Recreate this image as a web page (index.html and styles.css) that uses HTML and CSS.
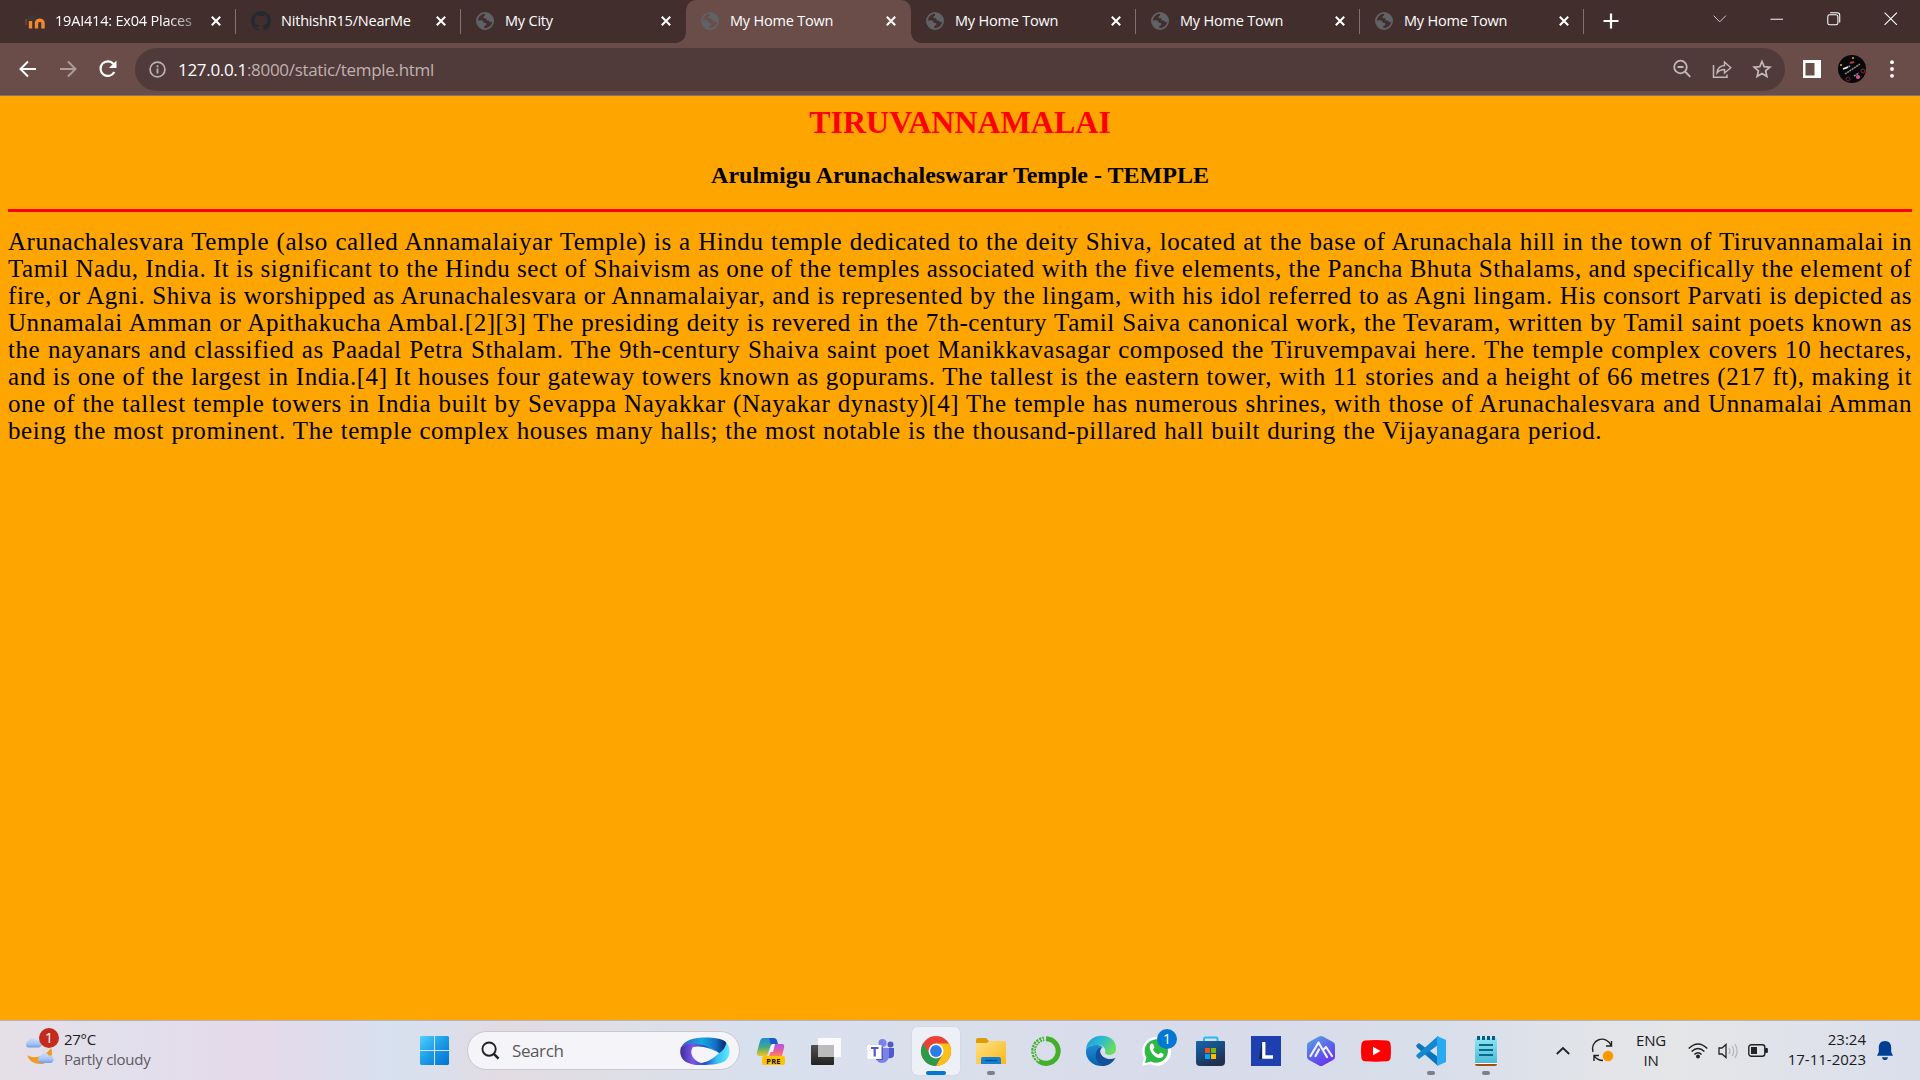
FILE: index.html
```html
<!DOCTYPE html>
<html lang="en">
<head>
<meta charset="utf-8">
<title>My Home Town</title>
<link rel="stylesheet" href="styles.css">
</head>
<body>
<svg class="defs" width="0" height="0">
  <defs>
    <symbol id="globe" viewBox="0 0 18 18"><circle cx="9" cy="9" r="8.100" fill="none" stroke="#5f6368" stroke-width="1.800"/><path d="M9 1.500C14 1.500 17 5 16.500 9.500L14.500 10.300 12.500 8.500 10.500 8.300 10.500 6.500 7.500 6 7.500 4.500 9 3.500Z" fill="#5f6368"/><path d="M1.500 8.500L6 8.300 8 10.700 10.300 11.300 10.300 12.800 8.300 14 8.300 16.500C4.500 16.500 1.500 12.500 1.500 8.500Z" fill="#5f6368"/></symbol>
    <symbol id="x" viewBox="0 0 10 10"><path d="M.8.8l8.400 8.400M9.200.8L.8 9.200" stroke="#fff" stroke-width="2" fill="none"/></symbol>
    <linearGradient id="win" x1="0" y1="0" x2="1" y2="1"><stop offset="0" stop-color="#4fd0ff"/><stop offset=".5" stop-color="#1b9be6"/><stop offset="1" stop-color="#0071d4"/></linearGradient>
    <linearGradient id="loopTop" x1="0" y1="0" x2="1" y2="0"><stop offset="0" stop-color="#3f57cf"/><stop offset=".45" stop-color="#16a9dc"/><stop offset=".75" stop-color="#1275cc"/><stop offset="1" stop-color="#07246e"/></linearGradient>
    <linearGradient id="loopBot" x1="0" y1="0" x2="1" y2="0"><stop offset="0" stop-color="#3b2f9b"/><stop offset=".25" stop-color="#7d55e8"/><stop offset=".5" stop-color="#1c4fc4"/><stop offset=".75" stop-color="#36c3f5"/><stop offset="1" stop-color="#63e8ff"/></linearGradient>
    <linearGradient id="cpL" x1="0" y1="0" x2="0" y2="1"><stop offset="0" stop-color="#1a8de0"/><stop offset=".5" stop-color="#47a786"/><stop offset="1" stop-color="#f0c520"/></linearGradient>
    <linearGradient id="cpR" x1="0" y1="0" x2="0" y2="1"><stop offset="0" stop-color="#a45bea"/><stop offset=".6" stop-color="#ef5a9d"/><stop offset="1" stop-color="#f98a50"/></linearGradient>
    <linearGradient id="dark" x1="0" y1="0" x2="0" y2="1"><stop offset="0" stop-color="#505050"/><stop offset="1" stop-color="#222"/></linearGradient>
    <linearGradient id="fold" x1="0" y1="0" x2="1" y2="1"><stop offset="0" stop-color="#ffe08a"/><stop offset="1" stop-color="#fbb914"/></linearGradient>
    <linearGradient id="edgeTop" x1="0" y1="0" x2="1" y2=".5"><stop offset="0" stop-color="#1b94d8"/><stop offset=".5" stop-color="#2cbbd2"/><stop offset="1" stop-color="#69dd5a"/></linearGradient>
    <linearGradient id="edgeBot" x1="0" y1="0" x2="0" y2="1"><stop offset="0" stop-color="#1c8cd4"/><stop offset="1" stop-color="#0a5fb0"/></linearGradient>
    <linearGradient id="store" x1="0" y1="0" x2=".5" y2="1"><stop offset="0" stop-color="#1267b0"/><stop offset="1" stop-color="#20304f"/></linearGradient>
    <linearGradient id="hex" x1="0" y1="0" x2=".6" y2="1"><stop offset="0" stop-color="#58a8e2"/><stop offset=".6" stop-color="#5a62ea"/><stop offset="1" stop-color="#6b35f0"/></linearGradient>
    <linearGradient id="note" x1="0" y1="0" x2="0" y2="1"><stop offset="0" stop-color="#8de4f2"/><stop offset="1" stop-color="#4dbbd8"/></linearGradient>
    <linearGradient id="cloud" x1="0" y1="0" x2="0" y2="1"><stop offset="0" stop-color="#c9ddfa"/><stop offset=".6" stop-color="#a9c6f4"/><stop offset="1" stop-color="#6f9ce6"/></linearGradient>
  </defs>
</svg>

<header class="tabs">
  <div class="tab first">
    <svg class="fav" viewBox="0 0 20 20"><path d="M5.500 17.500V10" stroke="#ef8a30" stroke-width="3.400" fill="none"/><path d="M11.500 17.500V12C11.500 8.300 18 8.300 18 12V17.500" stroke="#ef8a30" stroke-width="3.400" fill="none"/><path d="M0 8L7 4 12 4.500 10 8.500 5 10Z" fill="#3f3835"/><path d="M1 8V14" stroke="#8a5a3c"/></svg>
    <span class="title fade">19AI414: Ex04 Places</span><svg class="x"><use href="#x"/></svg>
  </div>
  <div class="tab">
    <svg class="fav" viewBox="0 0 16 16"><path fill="#24292f" d="M8 0C3.580 0 0 3.580 0 8c0 3.540 2.290 6.530 5.470 7.590.4.070.55-.17.55-.38v-1.490c-2.010.37-2.530-.49-2.690-.94-.09-.23-.48-.94-.82-1.130-.28-.15-.68-.52-.01-.53.63-.01 1.080.58 1.230.82.72 1.210 1.870.87 2.330.66.07-.52.28-.87.51-1.070-1.780-.2-3.640-.89-3.640-3.950 0-.87.31-1.590.82-2.150-.08-.2-.36-1.020.08-2.120 0 0 .67-.21 2.200.82a7.600 7.600 0 014 0c1.530-1.040 2.200-.82 2.200-.82.44 1.100.16 1.920.08 2.120.51.56.82 1.270.82 2.150 0 3.070-1.870 3.750-3.650 3.950.29.25.54.73.54 1.480v2.200c0 .21.15.46.55.38A8 8 0 0016 8c0-4.420-3.580-8-8-8z"/></svg>
    <span class="title wide">NithishR15/NearMe</span><svg class="x"><use href="#x"/></svg>
  </div>
  <div class="tab plain"><svg class="fav globe"><use href="#globe"/></svg><span class="title">My City</span><svg class="x"><use href="#x"/></svg></div>
  <div class="tab active"><svg class="fav globe"><use href="#globe"/></svg><span class="title">My Home Town</span><svg class="x"><use href="#x"/></svg></div>
  <div class="tab"><svg class="fav globe"><use href="#globe"/></svg><span class="title">My Home Town</span><svg class="x"><use href="#x"/></svg></div>
  <div class="tab short"><svg class="fav globe"><use href="#globe"/></svg><span class="title">My Home Town</span><svg class="x"><use href="#x"/></svg></div>
  <div class="tab short"><svg class="fav globe"><use href="#globe"/></svg><span class="title">My Home Town</span><svg class="x"><use href="#x"/></svg></div>
  <svg class="plus" viewBox="0 0 16 16"><path d="M8 .5v15M.5 8h15" stroke="#fff" stroke-width="2.200"/></svg>
  <div class="controls">
    <svg viewBox="0 0 14 14"><path d="M.7 3.800L7 10.200l6.300-6.400" stroke="#d8d2d2" fill="none"/></svg>
    <svg viewBox="0 0 14 14"><path d="M.5 7.500h13" stroke="#fff" fill="none"/></svg>
    <svg viewBox="0 0 14 14"><rect x=".8" y="2.800" width="10.500" height="10.500" rx="2" stroke="#fff" stroke-width="1.100" fill="none"/><path d="M3.200.8H10.500Q13.200.8 13.200 3.500V10.800" stroke="#fff" stroke-width="1.100" fill="none"/></svg>
    <svg viewBox="0 0 14 14"><path d="M.6.6l12.800 12.800M13.400.6L.6 13.400" stroke="#fff" stroke-width="1.100" fill="none"/></svg>
  </div>
</header>

<nav class="toolbar">
  <svg class="nav" viewBox="0 0 20 20"><path d="M18 10H3M10 2.500L2.500 10l7.500 7.500" stroke="#fff" stroke-width="2" fill="none"/></svg>
  <svg class="nav dim" viewBox="0 0 20 20"><path d="M2 10h15M10 2.500l7.500 7.500-7.500 7.500" stroke="#fff" stroke-width="2" fill="none"/></svg>
  <svg class="nav" viewBox="0 0 20 20"><path d="M16.300 13A7.300 7.300 0 1 1 15.500 5" stroke="#fff" stroke-width="2.200" fill="none"/><path d="M18.500 1.500V9H11Z" fill="#fff"/></svg>
  <div class="omni">
    <svg class="info" viewBox="0 0 17 17"><circle cx="8.500" cy="8.500" r="7.400" stroke="#b9b3b8" stroke-width="1.700" fill="none"/><path d="M8.500 7.500v5M8.500 4.300v2" stroke="#b9b3b8" stroke-width="1.800"/></svg>
    <span class="url"><b>127.0.0.1</b>:8000/static/temple.html</span>
    <svg class="act" viewBox="0 0 20 20"><circle cx="8.500" cy="8" r="6.300" stroke="#c3b8b8" stroke-width="1.800" fill="none"/><path d="M5.500 8h6M13 12.500l5.300 5.300" stroke="#c3b8b8" stroke-width="1.900"/></svg>
    <svg class="act" viewBox="0 0 20 20"><path d="M1.500 6v12.200h13.500V15.500" stroke="#c3b8b8" stroke-width="1.500" fill="none"/><path d="M5 14C5.500 9 8 6.800 12.500 6.500V3L18.800 8.700 12.500 14V10.500C9.500 10.500 7 11.500 5 14Z" stroke="#c3b8b8" stroke-width="1.400" fill="none"/></svg>
    <svg class="act" viewBox="0 0 20 20"><path d="M10 2.500l2.200 5.200 5.700.5-4.300 3.700 1.300 5.600-4.900-3-4.900 3 1.300-5.600L2.100 8.200l5.700-.5Z" stroke="#c3b8b8" stroke-width="1.700" fill="none"/></svg>
  </div>
  <svg class="panel" viewBox="0 0 18 18"><path fill-rule="evenodd" d="M0 0h18v18H0ZM2.500 3v12.500h9V3Z" fill="#fff"/></svg>
  <svg class="avatar" viewBox="0 0 28 28"><circle cx="14" cy="14" r="14" fill="#080808"/><path d="M7 19L22 9M8 13l4-2M16 21l5-3" stroke="#8f8f8f" stroke-width="1.500" stroke-dasharray="2 .7"/><path d="M5 14l5-2" stroke="#eee" stroke-width="1.600"/><path d="M12 8l4-1" stroke="#b23b48" stroke-width="2"/><circle cx="10" cy="24" r="2" fill="none" stroke="#7a1f35"/><circle cx="25" cy="16" r="2" fill="none" stroke="#9a1f38"/><circle cx="20" cy="22" r="2" fill="#e653a5"/><circle cx="15" cy="3" r="1" fill="#e8b03a"/><circle cx="3" cy="10" r="1" fill="#e8b03a"/></svg>
  <svg class="dots" viewBox="0 0 4 18"><circle cx="2" cy="2.200" r="1.900" fill="#fff"/><circle cx="2" cy="9" r="1.900" fill="#fff"/><circle cx="2" cy="15.800" r="1.900" fill="#fff"/></svg>
</nav>

<main class="page">
  <h1>TIRUVANNAMALAI</h1>
  <h2>Arulmigu Arunachaleswarar Temple - TEMPLE</h2>
  <hr>
  <p>
    <span>Arunachalesvara Temple (also called Annamalaiyar Temple) is a Hindu temple dedicated to the deity Shiva, located at the base of Arunachala hill in the town of Tiruvannamalai in</span>
    <span>Tamil Nadu, India. It is significant to the Hindu sect of Shaivism as one of the temples associated with the five elements, the Pancha Bhuta Sthalams, and specifically the element of</span>
    <span>fire, or Agni. Shiva is worshipped as Arunachalesvara or Annamalaiyar, and is represented by the lingam, with his idol referred to as Agni lingam. His consort Parvati is depicted as</span>
    <span>Unnamalai Amman or Apithakucha Ambal.[2][3] The presiding deity is revered in the 7th-century Tamil Saiva canonical work, the Tevaram, written by Tamil saint poets known as</span>
    <span>the nayanars and classified as Paadal Petra Sthalam. The 9th-century Shaiva saint poet Manikkavasagar composed the Tiruvempavai here. The temple complex covers 10 hectares,</span>
    <span>and is one of the largest in India.[4] It houses four gateway towers known as gopurams. The tallest is the eastern tower, with 11 stories and a height of 66 metres (217 ft), making it</span>
    <span>one of the tallest temple towers in India built by Sevappa Nayakkar (Nayakar dynasty)[4] The temple has numerous shrines, with those of Arunachalesvara and Unnamalai Amman</span>
    <span class="last">being the most prominent. The temple complex houses many halls; the most notable is the thousand-pillared hall built during the Vijayanagara period.</span>
  </p>
</main>

<footer class="taskbar">
  <div class="weather">
    <div class="wicon">
      <svg viewBox="0 0 32 30"><path d="M3 19C8 23 20 22 27 12C30 18 26 28 17 28C10 28 5 25 3 19Z" fill="#f29a1f"/><path d="M3.500 11.500A3.800 3.800 0 0 1 4 5A5 5 0 0 1 13 4.500A3.600 3.600 0 0 1 15 11.500Z" fill="url(#cloud)"/><path d="M15.500 27A3.800 3.800 0 0 1 16 20.500A5 5 0 0 1 25 19.500A3.900 3.900 0 0 1 27 27Z" fill="url(#cloud)"/></svg>
      <span class="badge red">1</span>
    </div>
    <div class="wtext"><span class="temp">27°C</span><span class="cond">Partly cloudy</span></div>
  </div>
  <svg class="start" viewBox="0 0 29 29"><path d="M1 0H14V14H0V1ZM15 0H28L29 1V14H15ZM0 15H14V29H1L0 28ZM15 15H29V28L28 29H15Z" fill="url(#win)"/></svg>
  <div class="search">
    <svg class="mag" viewBox="0 0 20 20"><circle cx="8.500" cy="8.500" r="7" stroke="#222" stroke-width="2" fill="none"/><path d="M13.500 13.500l5 5" stroke="#222" stroke-width="2.600"/></svg>
    <span>Search</span>
    <svg class="loop" viewBox="0 0 50 28"><path fill-rule="evenodd" d="M1 10C-2 20 4 28 20 28C32 28 44 27 47 22C51 17 50 10 46 5L36 2 10 4ZM13 10C9 15 12 23 21 26C28 25 34 21 39 16C32 12 22 8 13 10Z" fill="url(#loopBot)"/><path d="M1 11C5 -1 28 0 37 1.500C42 2.300 46 4 46 6C46 10 42 15 39 16C34 11 23 7 14 7C7 7 2 8 1 11Z" fill="url(#loopTop)"/></svg>
  </div>
  <div class="apps">
    <div class="app"><svg viewBox="0 0 30 30"><path d="M7 2H17Q21 2 20 6L15 9 11 20H4Q0 20 1 16L4 5Q5 2 7 2Z" fill="url(#cpL)"/><path d="M13 2H18Q21 2 22 8H16Q13 8 14 5Z" fill="#1b58c8"/><path d="M18 8H26Q29 8 28 12L26 20H13Z" fill="url(#cpR)"/><path d="M15 10L17 8H19L17 16H13Z" fill="#f4eff8"/><rect x="6" y="20" width="23" height="9" rx="2" fill="#ffc400"/><text x="17.500" y="27.800" class="pre">PRE</text></svg></div>
    <div class="app"><svg viewBox="0 0 30 30"><rect y="9" width="23" height="20" rx="1" fill="url(#dark)"/><path d="M7 2H30V21H7Z" fill="#fff" fill-opacity=".85"/><path d="M7 9H23V21H7Z" fill="#bbb"/></svg></div>
    <div class="app"><svg viewBox="0 0 30 30"><circle cx="16.500" cy="7" r="4" fill="#7b83eb"/><circle cx="24.500" cy="8.500" r="3" fill="#5059c9"/><path d="M22 12H28V19Q27 23 22 22Z" fill="#5059c9"/><path d="M10 12H23V20Q22 27 16 27Q11 27 10 22Z" fill="#7b83eb"/><path d="M16 11v12H10" stroke="#555cc0" stroke-width="2" fill="none"/><rect x="1.500" y="9" width="14" height="14" fill="#fff"/><path d="M5 12H12.500M8.700 12V20.500" stroke="#5059c9" stroke-width="2.200"/></svg></div>
    <div class="app current"><svg viewBox="0 0 30 30"><circle cx="15" cy="15" r="15" fill="#ea4335"/><path d="M2 7.500A15 15 0 0 0 15 30L21.100 18.500 8.900 18.500Z" fill="#2c9a49"/><path d="M15 30A15 15 0 0 0 28 7.500H15L21.500 18.700Z" fill="#fbc116"/><circle cx="15" cy="15" r="7.500" fill="#fff"/><circle cx="15" cy="15" r="5.900" fill="#2b7de9"/></svg></div>
    <div class="app run"><svg viewBox="0 0 30 30"><path d="M0 4Q0 2 2 2H10L13 5V9H0Z" fill="#dd9d08"/><path d="M0 7H11L13 5H28Q30 5 30 7V28H0Z" fill="url(#fold)"/><path d="M5 28V23Q5 21 7 21H23Q25 21 25 23V28Z" fill="#127fd2"/><path d="M9 24.500H21" stroke="#0a4c92" stroke-width="1.200"/></svg></div>
    <div class="app"><svg viewBox="0 0 30 30"><path d="M15 2.700A12.300 12.300 0 1 1 8 25.200" stroke="#43b02a" stroke-width="5" fill="none"/><path d="M8 25.200A12.300 12.300 0 0 1 13 2.800" stroke="#43b02a" stroke-width="4.600" stroke-dasharray="2.200 .9" fill="none"/><path d="M8 25A12.300 12.300 0 0 1 12.500 3" stroke="#dadfea" stroke-width="1.200" stroke-dasharray="2 1.200" fill="none"/></svg></div>
    <div class="app"><svg viewBox="0 0 30 30"><path d="M0 14C1-5 30-4 30 12C30 17 27 19 23 19C20 19 18 18 19 16C20 14 18 8 10 9C5 9 1 11 0 14Z" fill="url(#edgeTop)"/><path d="M0 14C2 8 17 7 17 13C13 13 11 20 16 25C18 28 22 28 18 30C8 31-1 24 0 14Z" fill="url(#edgeBot)"/><path d="M13 12C8 16 8 26 17 30C23 30 27 26 29.500 22C22 25 15 21 14.500 16C14.500 14.500 15.500 12.500 17 12Z" fill="#134f9b"/><path d="M17 11.500C14 12 13.500 16 16 19C19 22.500 25 22 29.500 20L29 17C27 19.500 20 20 19 16.500C19.500 15 19.500 13 17 11.500Z" fill="#dadfea"/></svg></div>
    <div class="app"><svg viewBox="0 0 30 30"><path d="M1 30L3 22A14.500 14.500 0 1 1 9 28Z" fill="#fff"/><path d="M4 27L5.500 21.500A11.700 11.700 0 1 1 10 25.500Z" fill="#2eb944"/><path d="M9 9C10 7 12 7 12.500 9L13.500 11.500L12 13.500C13 16 15 17.500 17.500 18.500L19.500 16.500L22.500 18C23 21 20 22.500 17.500 22C12.500 21 7.500 14 9 9Z" fill="#fff"/></svg><span class="badge blue">1</span></div>
    <div class="app"><svg viewBox="0 0 30 30"><path d="M8 6V3Q8 1.500 9.500 1.500H20Q21.500 1.500 21.500 3V6" stroke="#25bdf1" stroke-width="2" fill="none"/><path d="M0 6Q0 5 1 5H28Q29 5 29 6V26Q29 30 25 30H4Q0 30 0 26Z" fill="url(#store)"/><path d="M9 12h5v5H9Z" fill="#f25022"/><path d="M15 12h5v5h-5Z" fill="#7fba00"/><path d="M9 18h5v5H9Z" fill="#00a4ef"/><path d="M15 18h5v5h-5Z" fill="#ffb900"/></svg></div>
    <div class="app"><svg viewBox="0 0 30 30"><rect width="30" height="30" fill="#1d3faf"/><path d="M11 6L8 23H13Z" fill="#0b2a4a"/><path d="M12.800 6V21H22" stroke="#fff" stroke-width="3.300" fill="none"/></svg></div>
    <div class="app"><svg viewBox="0 0 30 30"><path d="M13 .6Q15-.5 17 .6L27 6Q29 7 29 9V21Q29 23 27 24L17 29.500Q15 30.500 13 29.500L3 24Q1 23 1 21V9Q1 7 3 6Z" fill="url(#hex)"/><path d="M4.500 20L12.500 6.500 21 21M9.500 20L13 13.500M18 13L20 11 26 20" stroke="#f2f0ff" stroke-width="2.200" fill="none" stroke-linecap="round" stroke-linejoin="round"/></svg></div>
    <div class="app"><svg viewBox="0 0 30 30"><path d="M4 4.500Q15 3.500 26 4.500Q29.500 5 29.700 9Q30.300 15 29.700 21Q29.500 25 26 25.300Q15 26 4 25.300Q.5 25 .3 21Q-.3 15 .3 9Q.5 5 4 4.500Z" fill="#f00"/><path d="M12 10.700L19.500 15L12 19.300Z" fill="#fff"/></svg></div>
    <div class="app run"><svg viewBox="0 0 30 30"><path d="M0 9.500L3 7 22 21V30L1 11.500Z" fill="#0a74bd"/><path d="M0 20L3 23 22 9V0L1 18.500Z" fill="#1488cf"/><path d="M21 0L30 4V26L21 30Z" fill="#29a9f2"/></svg></div>
    <div class="app run"><svg viewBox="0 0 30 30"><path d="M4 25H26V28Q26 30 24 30H6Q4 30 4 28Z" fill="#a34f0b"/><path d="M4 25H26V28H4Z" fill="#fff"/><path d="M4 4Q4 2 6 2H24Q26 2 26 4V27H4Z" fill="url(#note)"/><path d="M8 9H22M8 14H22M8 19H22" stroke="#086a8c" stroke-width="1.800"/><path d="M7.500 0V4M12.500 0V4M17.500 0V4M22.500 0V4" stroke="#075c80" stroke-width="3"/></svg></div>
  </div>
  <div class="tray">
    <svg class="chev" viewBox="0 0 14 8"><path d="M.8 7L7 1l6.200 6" stroke="#222" stroke-width="1.800" fill="none"/></svg>
    <svg class="upd" viewBox="0 0 22 22"><path d="M1 12A9.500 9.500 0 0 1 19 5.500M19.500 1V6H14M2 21V15.500H7M2.500 16.500Q6 20.500 11 20.500" stroke="#222" stroke-width="1.400" fill="none"/><circle cx="16" cy="16" r="5.300" fill="#ff9800"/></svg>
    <div class="lang"><span>ENG</span><span>IN</span></div>
    <svg class="wifi" viewBox="0 0 20 16"><path d="M.7 5.500Q10-3.500 19.300 5.500M3.600 8.600Q10 2.400 16.400 8.600M6.400 11.500Q10 8 13.600 11.500" stroke="#222" stroke-width="1.400" fill="none"/><circle cx="10" cy="13.500" r="2" fill="#222"/></svg>
    <svg class="vol" viewBox="0 0 20 16"><path d="M1 5H4L8 1.500V14.500L4 11H1Z" stroke="#222" stroke-width="1.300" fill="none"/><path d="M11 5Q13 8 11 11M14 3Q17.500 8 14 13M16.800 1Q21.500 8 16.800 15" stroke="#b5b5b8" stroke-width="1.300" fill="none"/></svg>
    <svg class="bat" viewBox="0 0 20 13"><rect x=".8" y=".8" width="16" height="11.400" rx="2.500" stroke="#222" stroke-width="1.400" fill="none"/><rect x="3" y="3" width="6" height="7" fill="#222"/><path d="M17.500 4.500H19.300V8.500H17.500Z" fill="#222" stroke="#222"/></svg>
    <div class="clock"><span>23:24</span><span>17-11-2023</span></div>
    <svg class="bell" viewBox="0 0 16 19"><path d="M8 0C4 0 1.800 2.800 1.800 6.500V11L0 14.800H16L14.200 11V6.500C14.200 2.800 12 0 8 0ZM5 16.200H11Q10.500 19 8 19Q5.500 19 5 16.200Z" fill="#003f94"/></svg>
  </div>
</footer>
</body>
</html>
```

FILE: styles.css
```css
* { box-sizing: border-box; }
body { margin: 0; width: 1920px; height: 1080px; overflow: hidden; display: flex; flex-direction: column; background: orange; font-family: "Open Sans", "Noto Sans", sans-serif; }
svg { display: block; flex: none; overflow: visible; }
.defs { position: absolute; }

.tabs { height: 43px; flex: none; display: flex; background: #432e2e; padding-left: 11px; }
.tab { width: 225px; flex: none; height: 43px; display: flex; align-items: center; padding: 0 15px 2px; position: relative; color: #fff; }
.tab.short { width: 224px; }
.tab.first { padding-left: 14px; }
.tab.first .fav { margin-right: 10px; }
.tab::after { content: ""; position: absolute; right: 0; top: 9px; width: 1px; height: 25px; background: #84706f; }
.tab.plain::after { display: none; }
.tab.active { background: #6a4d48; border-radius: 10px 10px 0 0; }
.tab.active::before, .tab.active::after { display: block; content: ""; top: auto; bottom: 0; position: absolute; width: 10px; height: 10px; background: radial-gradient(circle at 0 0, #432e2e 9.500px, #6a4d48 10px); }
.tab.active::before { left: -10px; }
.tab.active::after { right: -10px; background: radial-gradient(circle at 100% 0, #432e2e 9.500px, #6a4d48 10px); }
.fav { width: 20px; height: 20px; margin-right: 10px; }
.fav.globe { width: 18px; height: 18px; margin-right: 11px; }
.title { flex: 1; font-size: 14.500px; letter-spacing: -.2px; white-space: nowrap; overflow: hidden; }
.fade { margin-right: 17px; -webkit-mask-image: linear-gradient(90deg, #000 80%, rgba(0,0,0,.4)); mask-image: linear-gradient(90deg, #000 80%, rgba(0,0,0,.4)); }
.x { width: 10px; height: 10px; }
.plus { width: 16px; height: 16px; margin: 13px 0 0 19px; }
.controls { display: flex; gap: 43.500px; margin: 12px 23px 0 auto; }
.controls svg { width: 13.500px; height: 13.500px; }

.toolbar { height: 53px; flex: none; display: flex; align-items: center; background: #6a4d48; border-bottom: 1px solid #88716d; padding: 0 26px 0 18px; }
.nav { width: 20px; height: 20px; margin-right: 20px; }
.dim { opacity: .45; }
.omni { width: 1650px; height: 43px; border-radius: 22px; background: #503b3a; margin-left: -3px; display: flex; align-items: center; padding: 0 13px 0 14px; }
.info { width: 17px; height: 17px; margin-right: 12px; }
.url { flex: 1; font-size: 17px; letter-spacing: -.31px; color: #c0b1b0; white-space: nowrap; }
.url b { color: #fff; font-weight: 400; }
.act { width: 20px; height: 20px; margin-left: 20px; }
.panel { width: 18px; height: 18px; margin: 0 17px 0 18px; }
.avatar { width: 28px; height: 28px; }
.dots { width: 4px; height: 18px; margin-left: 24px; }

.page { flex: 1; padding: 8px; color: #000; }
h1, h2 { font-family: "Liberation Serif", serif; text-align: center; margin: 0; }
h1 { font-size: 32px; line-height: 37px; color: red; }
h2 { font-size: 24px; line-height: 27px; margin-top: 21px; }
hr { height: 3px; border: 0; margin: 20px 0 16px; background: red; }
.page p { margin: 0; font: 25px/27px "Liberation Serif", serif; letter-spacing: .55px; word-spacing: -2px; }
.page p span { display: block; text-align: justify; text-align-last: justify; }
.page p .last { width: 1594px; }

.taskbar { height: 60px; flex: none; display: flex; align-items: center; border-top: 1px solid #b3b3c6; background: linear-gradient(90deg, #e5dfe6 0, #e2dfec 120px, #e5daea 250px, #dfdcec 320px, #d7e1ef 385px, #dadfec 440px, #e2dbe2 500px, #dfdfe6 620px, #d8e0ee 760px, #dadfec 900px, #d8dcea 1200px, #d9deeb 1450px, #e2e4e8 1600px, #e5e6e8 1680px, #dfe2ea 1800px, #dadfec 1920px); color: #1b1b1b; }
.weather { display: flex; width: 420px; padding-left: 24px; align-items: center; }
.wicon { width: 32px; height: 30px; position: relative; }
.wicon svg { width: 32px; height: 30px; }
.badge { position: absolute; width: 20px; height: 20px; border-radius: 50%; color: #fff; font-size: 14px; line-height: 20px; text-align: center; }
.red { background: #c42b1c; left: 15px; top: -8px; }
.blue { background: #0078d4; left: 25px; top: 2px; }
.wtext { display: flex; flex-direction: column; margin: -4px 0 0 8px; font-size: 15px; line-height: 20px; letter-spacing: -.27px; }
.cond { color: #5d5b62; }
.start { width: 29px; height: 29px; }
.search { width: 273px; height: 39px; margin-left: 18px; border: 1px solid #c9c7d0; border-radius: 20px; background: #f5f4f8; display: flex; align-items: center; padding: 0 9px 0 13px; color: #595959; font-size: 17px; letter-spacing: -.4px; }
.mag { width: 19px; height: 19px; margin-right: 12px; }
.loop { width: 50px; height: 28px; margin-left: auto; }
.apps { display: flex; margin-left: 7px; gap: 7px; }
.app { width: 48px; height: 48px; display: flex; align-items: center; justify-content: center; position: relative; }
.app > svg { width: 30px; height: 30px; }
.current { background: #edf0f7; border-radius: 5px; box-shadow: 0 0 1px #b0b0bb; }
.current::after, .run::after { content: ""; position: absolute; bottom: 0; left: 14px; width: 20px; height: 4px; border-radius: 2px; background: #0078d4; }
.run::after { width: 8px; left: 20px; background: #7e8087; }
.pre { font: bold 7.500px "Open Sans", sans-serif; text-anchor: middle; letter-spacing: .2px; fill: #111; }
.tray { display: flex; align-items: center; margin-left: auto; padding-right: 27px; font-size: 15px; line-height: 20px; letter-spacing: -.2px; }
.tray span { display: block; }
.chev { width: 14px; height: 8px; margin-right: 22px; }
.upd { width: 22px; height: 22px; margin-right: 22px; }
.lang { width: 30px; text-align: center; margin: -2px 22px 0 0; }
.wifi { width: 20px; height: 16px; margin-right: 10px; }
.vol { width: 20px; height: 16px; margin-right: 10px; }
.bat { width: 20px; height: 13px; }
.clock { width: 98px; text-align: right; margin: -4px 11px 0 0; letter-spacing: 0; }
.bell { width: 16px; height: 19px; }
```
